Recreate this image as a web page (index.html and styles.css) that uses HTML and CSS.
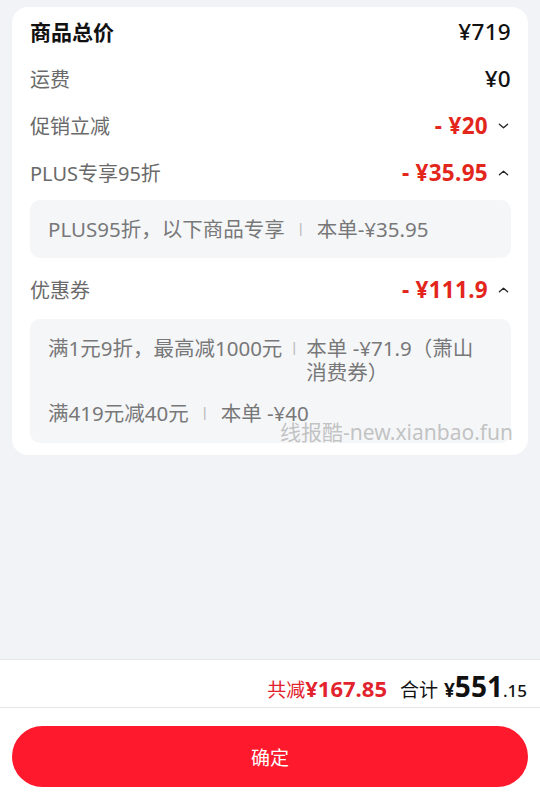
FILE: index.html
```html
<!DOCTYPE html>
<html lang="zh-CN">
<head>
<meta charset="utf-8">
<link rel="stylesheet" href="styles.css">
</head>
<body>
<div class="page">
  <main class="main">
    <section class="card">
      <div class="row row-head">
        <span class="label-head">商品总价</span>
        <span class="amount">¥719</span>
      </div>
      <div class="row">
        <span class="label">运费</span>
        <span class="amount">¥0</span>
      </div>
      <div class="row">
        <span class="label">促销立减</span>
        <span class="amount-wrap"><span class="amount red">- ¥20</span><svg class="chev" viewBox="0 0 12 8"><path d="M1.5 2 L6 6 L10.5 2" fill="none" stroke="#222" stroke-width="1.4" stroke-linecap="round" stroke-linejoin="round"/></svg></span>
      </div>
      <div class="row">
        <span class="label">PLUS专享95折</span>
        <span class="amount-wrap"><span class="amount red">- ¥35.95</span><svg class="chev" viewBox="0 0 12 8"><path d="M1.5 6 L6 2 L10.5 6" fill="none" stroke="#222" stroke-width="1.4" stroke-linecap="round" stroke-linejoin="round"/></svg></span>
      </div>
      <div class="box box-plus">
        <div class="item">
          <span class="item-left">PLUS95折，以下商品专享</span>
          <span class="sep">丨</span>
          <span class="item-right">本单-¥35.95</span>
        </div>
      </div>
      <div class="row row-coupon">
        <span class="label">优惠券</span>
        <span class="amount-wrap"><span class="amount red">- ¥111.9</span><svg class="chev" viewBox="0 0 12 8"><path d="M1.5 6 L6 2 L10.5 6" fill="none" stroke="#222" stroke-width="1.4" stroke-linecap="round" stroke-linejoin="round"/></svg></span>
      </div>
      <div class="box box-coupon">
        <div class="item item-tight">
          <span class="item-left">满1元9折，最高减1000元</span>
          <span class="sep">丨</span>
          <span class="item-right">本单 -¥71.9（萧山消费券）</span>
        </div>
        <div class="item">
          <span class="item-left">满419元减40元</span>
          <span class="sep">丨</span>
          <span class="item-right">本单 -¥40</span>
        </div>
      </div>
    </section>
  </main>
  <footer class="footer">
    <div class="summary">
      <span class="sum-label red2">共减</span>
      <span class="sum-cut red2">¥167.85</span>
      <span class="sum-total-label">合计</span>
      <span class="sum-total"><span class="yen">¥</span><span class="int">551</span><span class="dec">.15</span></span>
    </div>
    <div class="action">
      <button class="confirm">确定</button>
    </div>
  </footer>
  <div class="watermark">线报酷-new.xianbao.fun</div>
</div>
</body>
</html>
```

FILE: styles.css
```css
* { box-sizing: border-box; }
html, body { margin: 0; padding: 0; }
body {
  width: 540px;
  height: 803px;
  overflow: hidden;
  background: #f2f3f7;
  font-family: "Noto Sans", "Noto Sans CJK SC", sans-serif;
  color: #1a1a1a;
}
.page {
  position: relative;
  height: 803px;
  display: flex;
  flex-direction: column;
}
.main {
  flex: 1;
  padding: 7px 12px 0;
}
.card {
  background: #fff;
  border-radius: 16px;
  padding: 0 17px 12px 18px;
}
.row {
  height: 47px;
  display: flex;
  align-items: center;
  justify-content: space-between;
}
.row-head { height: 48px; }
.row-coupon { margin-top: 8px; }
.label-head {
  font-size: 21px;
  font-weight: 700;
  color: #111;
}
.label {
  font-size: 20px;
  color: #6a6a6a;
}
.amount {
  font-size: 22.5px;
  font-weight: 500;
  color: #111;
  letter-spacing: 0.3px;
}
.amount.red {
  color: #e3261c;
  font-weight: 700;
}
.amount-wrap {
  display: flex;
  align-items: center;
}
.chev {
  width: 11px;
  height: 8px;
  margin-left: 10px;
  margin-right: 2px;
}
.box {
  background: #f5f6f8;
  border-radius: 10px;
  padding: 0 18px;
  font-size: 20.5px;
  color: #787878;
}
.box-plus {
  margin-top: 4px;
  height: 58px;
  display: flex;
  align-items: center;
}
.box-coupon {
  margin-top: 6px;
  padding: 17px 30px 18px 18px;
  display: flex;
  flex-direction: column;
  gap: 17px;
}
.item {
  display: flex;
  line-height: 24px;
}
.item-left { flex: none; }
.sep {
  flex: none;
  color: #b8b8b8;
  font-size: 14px;
  margin: 0 9px;
}
.item-tight .sep { margin: 0 5px; }
.item-right { flex: 1; }
.footer {
  background: #fff;
}
.summary {
  height: 49px;
  border-top: 1px solid #e6e6e8;
  border-bottom: 1px solid #e6e6e8;
  display: flex;
  align-items: baseline;
  justify-content: flex-end;
  padding: 7px 13px 0 0;
}
.red2 { color: #e2232e; }
.sum-label { font-size: 19px; }
.sum-cut { font-size: 22px; font-weight: 700; margin-right: 13px; }
.sum-total-label { font-size: 19px; color: #111; margin-right: 6px; }
.sum-total { color: #111; font-weight: 700; }
.sum-total .yen { font-size: 19px; }
.sum-total .int { font-size: 28px; }
.sum-total .dec { font-size: 17px; font-weight: 500; }
.action {
  height: 95px;
  padding: 18px 12px 0;
}
.confirm {
  width: 100%;
  height: 61px;
  border: none;
  border-radius: 31px;
  background: #fe1a2c;
  color: #fff;
  font-family: "Noto Sans CJK SC", sans-serif;
  font-size: 19px;
}
.watermark {
  position: absolute;
  left: 280px;
  top: 422px;
  font-size: 21px;
  line-height: 21px;
  color: rgba(150, 150, 150, 0.55);
  font-family: "Noto Sans", "Noto Sans CJK SC", sans-serif;
  white-space: nowrap;
}
```
